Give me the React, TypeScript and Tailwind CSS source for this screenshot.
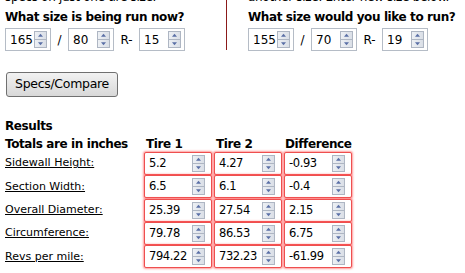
import React from "react";

const Spin = ({ h = 17 }: { h?: number }) => (
  <svg width="13" height={h} viewBox={`0 0 13 ${h}`} className="shrink-0">
    <defs>
      <linearGradient id="sg" x1="0" y1="0" x2="1" y2="0">
        <stop offset="0" stopColor="#eef1f5" />
        <stop offset="1" stopColor="#d9dee6" />
      </linearGradient>
    </defs>
    <rect x="0.5" y="0.5" width="12" height={h / 2 - 0.5} fill="url(#sg)" stroke="#aeb6c3" />
    <rect x="0.5" y={h / 2} width="12" height={h / 2 - 0.5} fill="url(#sg)" stroke="#aeb6c3" />
    <path d={`M4 ${h / 4 + 1.5} L6.5 ${h / 4 - 1.5} L9 ${h / 4 + 1.5} Z`} fill="#5a6fa6" />
    <path d={`M4 ${(3 * h) / 4 - 1.5} L6.5 ${(3 * h) / 4 + 1.5} L9 ${(3 * h) / 4 - 1.5} Z`} fill="#5a6fa6" />
  </svg>
);

const SizeInput = ({ v }: { v: string }) => (
  <div className="flex items-center justify-between w-[46px] h-[23px] border border-[#b5bcc6] bg-white pl-[4px] pr-[3px] text-[12px] text-black">
    <span>{v}</span>
    <Spin />
  </div>
);

const SizeRow = ({ a, b, c }: { a: string; b: string; c: string }) => (
  <div className="flex items-center mt-[3px]">
    <SizeInput v={a} />
    <span className="w-[17px] text-center text-[12px]">/</span>
    <SizeInput v={b} />
    <span className="w-[25px] text-center text-[12px]">R-</span>
    <SizeInput v={c} />
  </div>
);

const Cell = ({ v }: { v: string }) => (
  <div className="flex items-center justify-between h-[23px] border border-[#ee4f4f] rounded-[2px] bg-white pl-[4px] pr-[6px] shadow-[0_0_2px_1px_rgba(255,90,90,0.6)] text-[11.5px] tracking-[-0.4px] text-black">
    <span>{v}</span>
    <Spin />
  </div>
);

const rows: [string, string, string, string][] = [
  ["Sidewall Height:", "5.2", "4.27", "-0.93"],
  ["Section Width:", "6.5", "6.1", "-0.4"],
  ["Overall Diameter:", "25.39", "27.54", "2.15"],
  ["Circumference:", "79.78", "86.53", "6.75"],
  ["Revs per mile:", "794.22", "732.23", "-61.99"],
];

const bold = "text-[12px] font-bold leading-[15px] tracking-[-0.4px] whitespace-nowrap";

export default function App() {
  return (
    <div className="w-[465px] h-[273px] overflow-hidden bg-white text-black font-['DejaVu_Sans',Verdana,sans-serif]">
      <div className="flex">
        <div className="w-[227px] shrink-0 border-r border-[#8b1a1a] pl-[5px] h-[50px]">
          <div className="text-[12px] leading-[15px] mt-[-10px] whitespace-nowrap tracking-[-0.3px]">specs on just one tire size.</div>
          <div className={`${bold} mt-[5px]`}>What size is being run now?</div>
          <SizeRow a="165" b="80" c="15" />
        </div>
        <div className="pl-[21px] h-[50px] min-w-0">
          <div className="text-[12px] leading-[15px] mt-[-10px] whitespace-nowrap tracking-[-0.3px]">another size. Enter new size below.</div>
          <div className={`${bold} mt-[5px]`}>What size would you like to run?</div>
          <SizeRow a="155" b="70" c="19" />
        </div>
      </div>

      <div className="pl-[6px] mt-[21px]">
        <button className="w-[112px] h-[25px] rounded-[3px] border border-[#707070] bg-gradient-to-b from-[#f2f2f2] to-[#d8d8d8] text-[12.5px] tracking-[-0.3px] text-black">
          Specs/Compare
        </button>
      </div>

      <div className={`pl-[5px] mt-[22px] ${bold}`}>Results</div>

      <div className="grid grid-cols-[137px_68px_68px_68px] gap-x-[2px] gap-y-[0.3px] pl-[5px] mt-[3px]">
        <div className={bold}>Totals are in inches</div>
        <div className={`${bold} pl-[2px]`}>Tire 1</div>
        <div className={`${bold} pl-[2px]`}>Tire 2</div>
        <div className={`${bold} pl-[1px]`}>Difference</div>
        {rows.map((r) => (
          <React.Fragment key={r[0]}>
            <div className="h-[23px] flex items-center text-[11px] underline whitespace-nowrap">{r[0]}</div>
            <Cell v={r[1]} />
            <Cell v={r[2]} />
            <Cell v={r[3]} />
          </React.Fragment>
        ))}
      </div>
    </div>
  );
}
